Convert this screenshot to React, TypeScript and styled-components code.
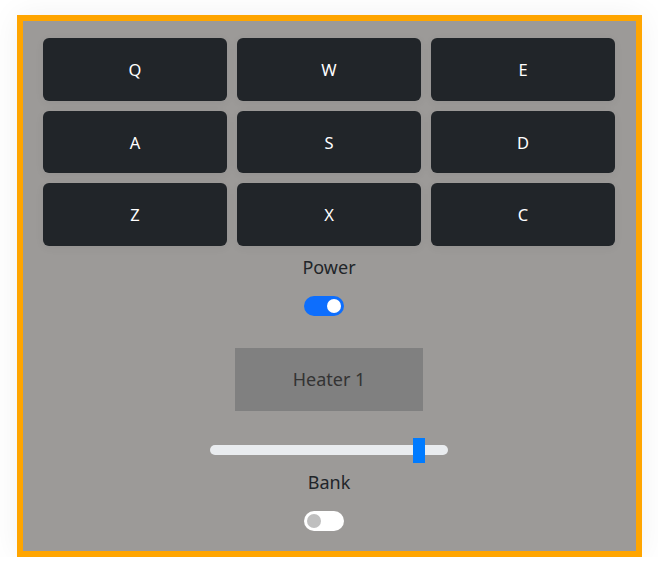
import React, { useState } from "react";
import styled, { createGlobalStyle } from "styled-components";

const keys = ["Q", "W", "E", "A", "S", "D", "Z", "X", "C"];

const App = () => {
  const [power, setPower] = useState(true);
  const [bank, setBank] = useState(false);
  const [volume, setVolume] = useState(0.9);

  return (
    <>
      <GlobalStyle />
      <Machine>
        <Pads>
          {keys.map((k) => (
            <Pad key={k}>{k}</Pad>
          ))}
        </Pads>
        <Controls>
          <Label>Power</Label>
          <Switch $on={power} onClick={() => setPower(!power)} />
          <Display>Heater 1</Display>
          <Slider
            type="range"
            min={0}
            max={1}
            step={0.01}
            value={volume}
            onChange={(e) => setVolume(Number(e.target.value))}
          />
          <Label $top={7}>Bank</Label>
          <Switch $on={bank} onClick={() => setBank(!bank)} />
        </Controls>
      </Machine>
    </>
  );
};

export default App;

const GlobalStyle = createGlobalStyle`
  body {
    margin: 0;
    background: #fff;
    font-family: "Noto Sans", "Open Sans", sans-serif;
  }
`;

const Machine = styled.div`
  box-sizing: border-box;
  margin: 15px 0 0 17px;
  width: 625px;
  height: 542px;
  border: 6px solid #ffa500;
  background: #9c9a98;
  padding: 17px 21px 0 20px;
  box-shadow: 0 0 30px rgba(0, 0, 0, 0.06);
`;

const Pads = styled.div`
  display: grid;
  grid-template-columns: repeat(3, 184px);
  grid-auto-rows: 62.5px;
  gap: 10px;
`;

const Pad = styled.button`
  border: none;
  border-radius: 6px;
  background: #212529;
  color: #fff;
  font-family: "Noto Sans", "Open Sans", sans-serif;
  font-size: 16.5px;
  padding-top: 2px;
  cursor: pointer;
  box-shadow: 0 2px 10px rgba(0, 0, 0, 0.05);
`;

const Controls = styled.div`
  display: flex;
  flex-direction: column;
  align-items: center;
`;

const Label = styled.div<{ $top?: number }>`
  margin-top: ${(p) => p.$top ?? 9}px;
  font-size: 18px;
  line-height: 24px;
  color: #212529;
`;

const Switch = styled.button<{ $on: boolean }>`
  position: relative;
  margin: 17px 10px 0 0;
  width: 40px;
  height: 20px;
  padding: 0;
  border: none;
  border-radius: 10px;
  background: ${(p) => (p.$on ? "#0d6efd" : "#fff")};
  cursor: pointer;

  &::after {
    content: "";
    position: absolute;
    top: 3px;
    left: ${(p) => (p.$on ? "23px" : "3px")};
    width: 14px;
    height: 14px;
    border-radius: 50%;
    background: ${(p) => (p.$on ? "#fff" : "#bfbfbf")};
  }
`;

const Display = styled.div`
  margin-top: 32px;
  width: 188px;
  height: 63px;
  display: flex;
  align-items: center;
  justify-content: center;
  background: #808080;
  color: #333;
  font-size: 18px;
`;

const Slider = styled.input`
  -webkit-appearance: none;
  appearance: none;
  margin: 27px 0 0;
  width: 238px;
  height: 25px;
  background: transparent;

  &::-webkit-slider-runnable-track {
    height: 10px;
    border-radius: 5px;
    background: #e9ecef;
  }

  &::-webkit-slider-thumb {
    -webkit-appearance: none;
    width: 12px;
    height: 25px;
    margin-top: -7.5px;
    border: none;
    border-radius: 0;
    background: #007bff;
    cursor: pointer;
  }
`;
